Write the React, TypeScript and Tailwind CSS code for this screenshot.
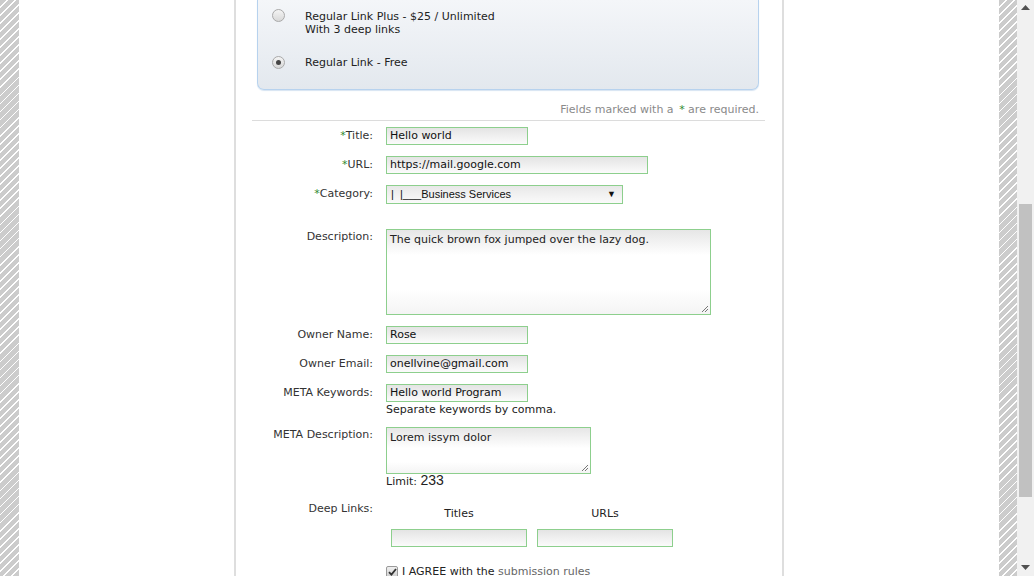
import React from "react";

const stripes =
  "bg-[repeating-linear-gradient(135deg,#cccccc_0px,#cccccc_4.5px,#ffffff_4.5px,#ffffff_5.7px)]";

const field =
  "h-[18px] border border-[#8dcf8d] bg-gradient-to-b from-[#e4e4e4] to-[#fbfbfb] px-[3px] text-[11px] leading-[16px] text-[#111]";

function Radio({ checked }: { checked?: boolean }) {
  return (
    <span className="flex h-[13px] w-[13px] items-center justify-center rounded-full border border-[#a9a9a9] bg-gradient-to-b from-[#f4f4f4] to-[#d8d8d8]">
      {checked && <span className="h-[5px] w-[5px] rounded-full bg-[#444]" />}
    </span>
  );
}

function Label({ children, req }: { children: React.ReactNode; req?: boolean }) {
  return (
    <div className="w-[137px] shrink-0 text-right text-[11px] leading-[18px] text-[#333]">
      {req && <span className="text-[#2e8b2e]">*</span>}
      {children}
    </div>
  );
}

export default function App() {
  return (
    <div className="flex h-[576px] w-[1034px] overflow-hidden bg-white font-['DejaVu_Sans',sans-serif]">
      <div className={`h-full w-[19px] shrink-0 ${stripes}`} />

      <div className="flex h-full flex-1 justify-center">
        <div className="h-full w-[550px] border-x-2 border-[#dedede] bg-white">
          {/* package choice */}
          <div className="ml-[21px] mr-[23px] h-[90px] rounded-b-[7px] border-x border-b border-[#b7d2ee] bg-gradient-to-b from-[#f4f6f9] to-[#e3e8ee] pl-[14px] shadow-[0_1px_1px_#d6e4f2]">
            <div className="flex items-start pt-[9px]">
              <Radio />
              <div className="ml-[20px] mt-[1px] text-[11px] leading-[13px] text-[#222]">
                <div>Regular Link Plus - $25 / Unlimited</div>
                <div>With 3 deep links</div>
              </div>
            </div>
            <div className="mt-[20px] flex items-center">
              <Radio checked />
              <div className="ml-[20px] text-[11px] leading-[13px] text-[#222]">Regular Link - Free</div>
            </div>
          </div>

          <div className="mr-[23px] mt-[13px] text-right text-[11px] leading-[14px] text-[#8a8a8a]">
            Fields marked with a <span className="ml-[2px] text-[#2e8b2e]">*</span> are required.
          </div>
          <div className="ml-[16px] mr-[17px] mt-[3px] h-px bg-[#dcdcdc]" />

          {/* form */}
          <div className="mt-[6px] flex flex-col">
            <div className="flex gap-[13px]">
              <Label req>Title:</Label>
              <div className={`${field} w-[142px]`}>Hello world</div>
            </div>
            <div className="mt-[11px] flex gap-[13px]">
              <Label req>URL:</Label>
              <div className={`${field} w-[262px]`}>https://mail.google.com</div>
            </div>
            <div className="mt-[11px] flex gap-[13px]">
              <Label req>Category:</Label>
              <div className="flex h-[19px] w-[237px] items-center justify-between border border-[#8dcf8d] bg-gradient-to-b from-[#e8e8e8] to-[#fafafa] pl-[4px] pr-[6px] font-['Liberation_Sans',sans-serif] text-[11px] text-[#111]">
                <span className="whitespace-pre">|  |___Business Services</span>
                <span className="text-[9px]">▼</span>
              </div>
            </div>
            <div className="mt-[25px] flex gap-[13px]">
              <div className="-mt-px">
                <Label>Description:</Label>
              </div>
              <div className="relative h-[86px] w-[325px] border border-[#8dcf8d] bg-[linear-gradient(to_bottom,#e6e6e6,#ffffff_30%,#ffffff_70%,#f4f4f4)] px-[3px] pt-[3px] text-[11px] leading-[14px] text-[#222]">
                The quick brown fox jumped over the lazy dog.
                <Grip />
              </div>
            </div>
            <div className="mt-[11px] flex gap-[13px]">
              <Label>Owner Name:</Label>
              <div className={`${field} w-[142px]`}>Rose</div>
            </div>
            <div className="mt-[11px] flex gap-[13px]">
              <Label>Owner Email:</Label>
              <div className={`${field} w-[142px]`}>onellvine@gmail.com</div>
            </div>
            <div className="mt-[11px] flex gap-[13px]">
              <Label>META Keywords:</Label>
              <div>
                <div className={`${field} w-[142px]`}>Hello world Program</div>
                <div className="mt-px text-[11px] leading-[14px] text-[#222]">Separate keywords by comma.</div>
              </div>
            </div>
            <div className="mt-[10px] flex gap-[13px]">
              <div className="-mt-px">
                <Label>META Description:</Label>
              </div>
              <div>
                <div className="relative h-[47px] w-[205px] border border-[#8dcf8d] bg-[linear-gradient(to_bottom,#e6e6e6,#ffffff_45%,#ffffff_75%,#f4f4f4)] px-[3px] pt-[3px] text-[11px] leading-[14px] text-[#222]">
                  Lorem issym dolor
                  <Grip />
                </div>
                <div className="-mt-px flex items-baseline text-[11px] leading-[14px] text-[#222]">
                  Limit:&nbsp;<span className="font-['Liberation_Sans',sans-serif] text-[14px]">233</span>
                </div>
              </div>
            </div>
            <div className="mt-[11px] flex gap-[13px]">
              <Label>Deep Links:</Label>
              <div className="ml-[5px] flex gap-[10px] pt-[7px]">
                <div className="flex flex-col items-center">
                  <div className="text-[11px] leading-[14px] text-[#222]">Titles</div>
                  <div className={`${field} mt-[8px] w-[136px]`} />
                </div>
                <div className="flex flex-col items-center">
                  <div className="text-[11px] leading-[14px] text-[#222]">URLs</div>
                  <div className={`${field} mt-[8px] w-[136px]`} />
                </div>
              </div>
            </div>
            <div className="ml-[150px] mt-[18px] flex items-center gap-[4px]">
              <span className="flex h-[12px] w-[12px] items-center justify-center rounded-[2px] border border-[#9a9a9a] bg-gradient-to-b from-[#f0f0f0] to-[#cfcfcf]">
                <svg width="9" height="8" viewBox="0 0 9 8">
                  <path d="M1 4.2 L3.4 6.6 L8 1" fill="none" stroke="#333" strokeWidth="1.8" />
                </svg>
              </span>
              <span className="text-[11px] leading-[14px] text-[#222]">
                I AGREE with the <span className="text-[#666]">submission rules</span>
              </span>
            </div>
          </div>
        </div>
      </div>

      <div className={`h-full w-[18px] shrink-0 ${stripes}`} />

      {/* scrollbar */}
      <div className="relative h-full w-[17px] shrink-0 bg-[#f1f1f1]">
        <svg className="absolute left-[4px] top-[5px]" width="9" height="5" viewBox="0 0 9 5">
          <path d="M0 5 L4.5 0 L9 5 Z" fill="#505050" />
        </svg>
        <div className="absolute left-[2px] top-[204px] h-[293px] w-[13px] bg-[#c1c1c1]" />
        <svg className="absolute bottom-[6px] left-[4px]" width="9" height="5" viewBox="0 0 9 5">
          <path d="M0 0 L9 0 L4.5 5 Z" fill="#505050" />
        </svg>
      </div>
    </div>
  );
}

function Grip() {
  return (
    <svg className="absolute bottom-[1px] right-[1px]" width="8" height="8" viewBox="0 0 8 8">
      <path d="M7 1 L1 7 M7 4 L4 7" stroke="#777" strokeWidth="1" />
    </svg>
  );
}
